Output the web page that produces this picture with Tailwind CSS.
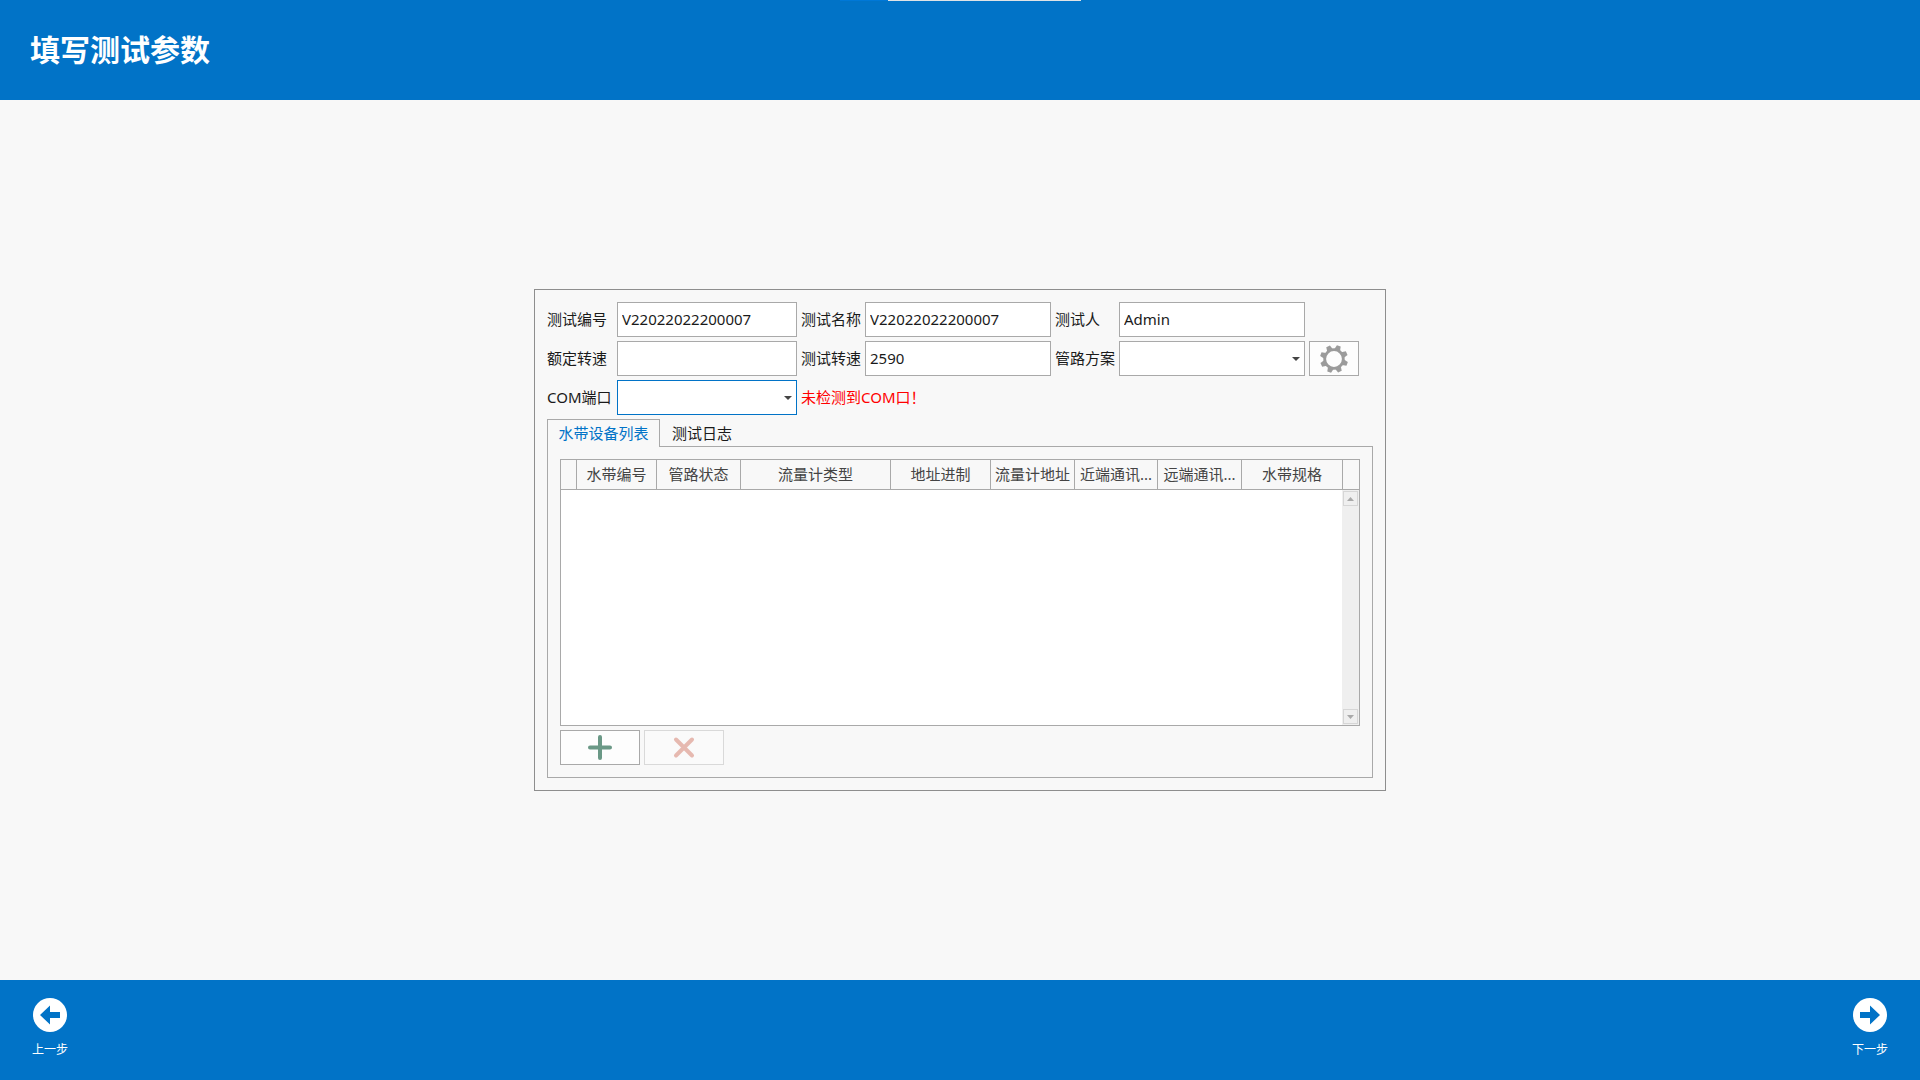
<!DOCTYPE html>
<html lang="zh-CN">
<head>
<meta charset="utf-8">
<meta name="viewport" content="width=device-width, initial-scale=1">
<title>填写测试参数</title>
<script src="https://cdn.jsdelivr.net/npm/@tailwindcss/browser@4"></script>
</head>
<body class="relative flex min-h-screen flex-col bg-[#f8f8f8] font-['Noto_Sans','Noto_Sans_CJK_SC',sans-serif] text-[15px] leading-5 text-[#1a1a1a]">
  <div class="absolute top-0 left-1/2 -ml-[120px] flex h-px w-[241px]">
    <div class="w-12 bg-[#0078d7]"></div>
    <div class="flex-1 bg-[#dfe3e6]"></div>
  </div>

  <header class="flex h-[100px] items-center bg-[#0173c7] px-[30px]">
    <h1 class="text-[30px] leading-10 font-bold text-white">填写测试参数</h1>
  </header>

  <main class="flex flex-1 items-center justify-center">
    <section class="border border-[#8e8e8e] p-3">
      <form class="grid grid-cols-[66px_180px_60px_186px_60px_186px_50px] items-center gap-1">
        <label for="test-no" class="pb-0.5 whitespace-nowrap">测试编号</label>
        <input id="test-no" type="text" value="V22022022200007" class="h-[35px] w-full border border-[#a9a9a9] bg-white px-1 pb-0.5 outline-none">
        <label for="test-name" class="pb-0.5 whitespace-nowrap">测试名称</label>
        <input id="test-name" type="text" value="V22022022200007" class="h-[35px] w-full border border-[#a9a9a9] bg-white px-1 pb-0.5 outline-none">
        <label for="tester" class="pb-0.5 whitespace-nowrap">测试人</label>
        <input id="tester" type="text" value="Admin" class="h-[35px] w-full border border-[#a9a9a9] bg-white px-1 pb-0.5 outline-none">
        <span></span>

        <label for="rated-speed" class="pb-0.5 whitespace-nowrap">额定转速</label>
        <input id="rated-speed" type="text" class="h-[35px] w-full border border-[#a9a9a9] bg-white px-1 pb-0.5 outline-none">
        <label for="test-speed" class="pb-0.5 whitespace-nowrap">测试转速</label>
        <input id="test-speed" type="text" value="2590" class="h-[35px] w-full border border-[#a9a9a9] bg-white px-1 pb-0.5 outline-none">
        <label for="pipe-plan" class="pb-0.5 whitespace-nowrap">管路方案</label>
        <div class="relative">
          <select id="pipe-plan" class="block h-[35px] w-full appearance-none border border-[#a9a9a9] bg-white px-1 outline-none"><option></option></select>
          <svg class="pointer-events-none absolute top-4 right-[5px]" width="8" height="4" viewBox="0 0 8 4" fill="#444"><path d="M0 0h8L4 4z"/></svg>
        </div>
        <button type="button" aria-label="设置" class="flex h-[35px] items-center justify-center border border-[#a9a9a9] bg-[#fdfdfd]">
          <svg width="28" height="28" viewBox="-14 -14 28 28" fill="none" stroke="#9b9b9b">
            <circle r="9.3" stroke-width="2.8"/>
            <g fill="#9b9b9b" stroke="none" transform="rotate(20)">
              <path id="tooth" d="M-3-9.500-2-14H2L3-9.500z"/>
              <use href="#tooth" transform="rotate(45)"/><use href="#tooth" transform="rotate(90)"/>
              <use href="#tooth" transform="rotate(135)"/><use href="#tooth" transform="rotate(180)"/>
              <use href="#tooth" transform="rotate(225)"/><use href="#tooth" transform="rotate(270)"/>
              <use href="#tooth" transform="rotate(315)"/>
            </g>
          </svg>
        </button>

        <label for="com-port" class="pb-0.5 whitespace-nowrap">COM端口</label>
        <div class="relative">
          <select id="com-port" class="block h-[35px] w-full appearance-none border border-[#0173c7] bg-white px-1 outline-none"><option></option></select>
          <svg class="pointer-events-none absolute top-4 right-[5px]" width="8" height="4" viewBox="0 0 8 4" fill="#444"><path d="M0 0h8L4 4z"/></svg>
        </div>
        <p class="col-span-4 pb-0.5 whitespace-nowrap text-[#ff0000]">未检测到COM口！</p>
      </form>

      <div class="mt-1 flex" role="tablist">
        <button type="button" role="tab" aria-selected="true" class="z-10 -mb-px h-7 w-[113px] border border-b-0 border-[#a9a9a9] bg-[#f8f8f8] pb-0.5 text-[#0173c7]">水带设备列表</button>
        <button type="button" role="tab" aria-selected="false" class="h-7 px-3 pb-px">测试日志</button>
      </div>
      <div role="tabpanel" class="-mt-px border border-[#a9a9a9] p-3">
        <div class="border border-[#a9a9a9] bg-white">
          <table class="w-[798px] table-fixed border-separate border-spacing-0 text-[#444]">
            <colgroup>
              <col class="w-4"><col class="w-20"><col class="w-[84px]"><col class="w-[150px]"><col class="w-[100px]"><col class="w-[84px]"><col class="w-[83px]"><col class="w-[84px]"><col class="w-[101px]"><col class="w-4">
            </colgroup>
            <thead>
              <tr class="h-[30px] bg-[#f8f8f8] *:border-b *:border-[#a9a9a9] *:px-0 *:pt-0 *:pb-0.5 *:font-normal *:whitespace-nowrap">
                <th class="border-r"></th>
                <th class="border-r">水带编号</th>
                <th class="border-r">管路状态</th>
                <th class="border-r">流量计类型</th>
                <th class="border-r">地址进制</th>
                <th class="border-r">流量计地址</th>
                <th class="border-r">近端通讯...</th>
                <th class="border-r">远端通讯...</th>
                <th class="border-r">水带规格</th>
                <th></th>
              </tr>
            </thead>
          </table>
          <div class="flex h-[235px] justify-end">
            <div class="flex w-[17px] flex-col items-center justify-between bg-[#efefef] py-px">
              <button type="button" aria-label="向上滚动" class="flex size-[15px] items-center justify-center border border-[#d6d6d6]">
                <svg width="7" height="4" viewBox="0 0 7 4" fill="#a9a9a9"><path d="M0 4h7L3.5 0z"/></svg>
              </button>
              <button type="button" aria-label="向下滚动" class="flex size-[15px] items-center justify-center border border-[#d6d6d6]">
                <svg width="7" height="4" viewBox="0 0 7 4" fill="#a9a9a9"><path d="M0 0h7L3.5 4z"/></svg>
              </button>
            </div>
          </div>
        </div>
        <div class="mt-1 flex gap-1">
          <button type="button" aria-label="添加" class="flex h-[35px] w-20 items-center justify-center border border-[#a9a9a9] bg-[#fdfdfd]">
            <svg width="24" height="25" viewBox="0 0 24 25" stroke="#6a9886" stroke-width="4" stroke-linecap="round"><path d="M2 12.500h20M12 2v21"/></svg>
          </button>
          <button type="button" aria-label="删除" disabled class="flex h-[35px] w-20 items-center justify-center border border-[#d9d9d9] bg-[#fafafa]">
            <svg width="24" height="25" viewBox="0 0 24 25" stroke="#e6b9b0" stroke-width="4" stroke-linecap="round"><path d="M4 4.500l16 16M20 4.500l-16 16"/></svg>
          </button>
        </div>
      </div>
    </section>
  </main>

  <footer class="flex h-[100px] items-start justify-between bg-[#0173c7] px-8 pt-[18px] text-xs leading-4 text-white">
    <button type="button" class="flex flex-col items-center gap-2.5">
      <svg width="34" height="34" viewBox="0 0 34 34"><circle cx="17" cy="17" r="17" fill="#fff"/><path d="M7 17 17 7.500V14H27V20H17V26.500Z" fill="#0173c7"/></svg>
      上一步
    </button>
    <button type="button" class="flex flex-col items-center gap-2.5">
      <svg width="34" height="34" viewBox="0 0 34 34"><circle cx="17" cy="17" r="17" fill="#fff"/><path d="M27 17 17 7.500V14H7V20H17V26.500Z" fill="#0173c7"/></svg>
      下一步
    </button>
  </footer>
</body>
</html>
